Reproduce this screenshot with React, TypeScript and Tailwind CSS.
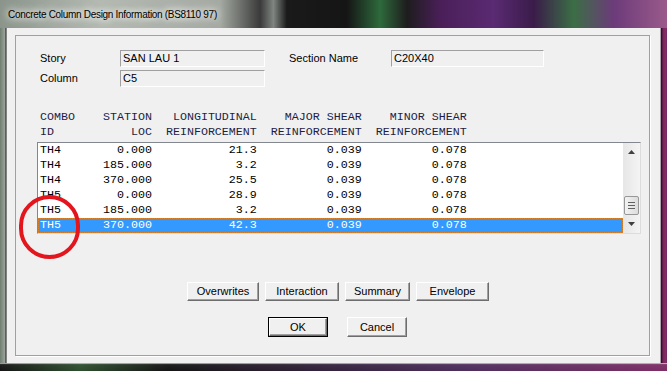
const rows = [
  ["TH4", "0.000", "21.3", "0.039", "0.078"],
  ["TH4", "185.000", "3.2", "0.039", "0.078"],
  ["TH4", "370.000", "25.5", "0.039", "0.078"],
  ["TH5", "0.000", "28.9", "0.039", "0.078"],
  ["TH5", "185.000", "3.2", "0.039", "0.078"],
  ["TH5", "370.000", "42.3", "0.039", "0.078"],
]

function line(r: string[]) {
  return r[0].padEnd(3) + r[1].padStart(13) + r[2].padStart(15) + r[3].padStart(15) + r[4].padStart(15)
}

function Field({ value, w }: { value: string; w: string }) {
  return (
    <div
      className={`${w} h-[17px] bg-[#f0f0f0] border border-t-[#a0a0a0] border-l-[#a0a0a0] border-r-white border-b-white pl-[2px] text-[11px] leading-[15px] text-black`}
    >
      {value}
    </div>
  )
}

function Btn({ label, w, def }: { label: string; w: string; def?: boolean }) {
  return (
    <div className={`${w} ${def ? "border border-black" : ""}`}>
      <div className="h-full flex items-center justify-center bg-[#f0f0f0] border border-t-white border-l-white border-r-[#6d6d6d] border-b-[#6d6d6d] text-[11px] text-black shadow-[inset_-1px_-1px_0_#a0a0a0]">
        {label}
      </div>
    </div>
  )
}

export default function App() {
  return (
    <div className="relative w-[667px] h-[371px] flex flex-col overflow-hidden bg-black font-['Liberation_Sans',Arial,sans-serif] select-none">
      {/* title bar */}
      <div className="h-[28px] flex items-center pl-[8px] bg-[linear-gradient(90deg,#8a948a_0%,#b4bab2_15%,#a4aaa2_33%,#3a3a3a_39%,#7f8580_41%,#1a1a1a_43%,#151515_52%,#2e6a3c_57%,#1d1d1d_61%,#4a1f58_66%,#5a2a72_74%,#3a1c4a_80%,#3b6e45_86%,#6c3b7a_92%,#9a5a8a_100%)]">
        <span className="text-[10px] tracking-[-0.3px] text-black [text-shadow:0_0_6px_#fff,0_0_10px_#fff,0_0_14px_rgba(255,255,255,0.8)]">
          Concrete Column Design Information (BS8110 97)
        </span>
      </div>

      <div className="flex flex-1">
        <div className="w-[7px] bg-[linear-gradient(90deg,#6f7d70,#9aa39a_70%,#2a2a2a_85%,#d0d0d0)]" />

        {/* client area */}
        <div className="flex-1 bg-[#f0f0f0] pl-[8px] pr-[10px] pt-[7px] pb-[7px] flex">
          <div className="flex-1 border border-[#a0a0a0] shadow-[1px_1px_0_#fff] pl-[21px] pt-[14px] flex flex-col">
            <div className="flex items-center h-[17px]">
              <span className="w-[83px] pl-[3px] text-[11px] text-black">Story</span>
              <Field value="SAN LAU 1" w="w-[145px]" />
              <span className="ml-[24px] w-[102px] text-[11px] text-black">Section Name</span>
              <Field value="C20X40" w="w-[153px]" />
            </div>
            <div className="flex items-center h-[17px] mt-[3px]">
              <span className="w-[83px] pl-[3px] text-[11px] text-black">Column</span>
              <Field value="C5" w="w-[145px]" />
            </div>

            <pre className="mt-[23px] pl-[3px] font-['Liberation_Mono','Courier_New',monospace] text-[11.67px] leading-[15px] text-[#1e1e46]">
              {"COMBO    STATION   LONGITUDINAL    MAJOR SHEAR    MINOR SHEAR\n"}
              {"ID           LOC  REINFORCEMENT  REINFORCEMENT  REINFORCEMENT"}
            </pre>

            <div className="mt-[2px] w-[604px] h-[92px] bg-white border border-t-[#828790] border-l-[#828790] border-r-[#dcdcdc] border-b-[#dcdcdc] flex">
              <div className="flex-1 flex flex-col">
                {rows.map((r, i) => {
                  const sel = i === rows.length - 1
                  return (
                    <pre
                      key={i}
                      className={`h-[15px] pl-[2px] font-['Liberation_Mono','Courier_New',monospace] text-[11.67px] leading-[15px] ${
                        sel ? "bg-[#3399ff] text-white outline-1 outline-dotted outline-[#d9822b] -outline-offset-1" : "text-black"
                      }`}
                    >
                      {line(r)}
                    </pre>
                  )
                })}
              </div>
              {/* scrollbar */}
              <div className="w-[17px] bg-[linear-gradient(90deg,#e6e6e6,#f4f4f4)] flex flex-col items-center">
                <div className="h-[17px] w-full flex items-center justify-center">
                  <svg width="7" height="4" viewBox="0 0 7 4"><path d="M0 4L3.5 0L7 4Z" fill="#404040" /></svg>
                </div>
                <div className="flex-1" />
                <div className="w-[15px] h-[19px] mb-[18px] rounded-[2px] border border-[#979797] bg-[linear-gradient(90deg,#f2f2f2,#dcdcdc)] flex flex-col items-center justify-center gap-[2px]">
                  <div className="w-[7px] h-px bg-[#606060]" />
                  <div className="w-[7px] h-px bg-[#606060]" />
                  <div className="w-[7px] h-px bg-[#606060]" />
                </div>
                <div className="h-[17px] w-full flex items-center justify-center -mt-[18px] mb-[1px]">
                  <svg width="7" height="4" viewBox="0 0 7 4"><path d="M0 0L3.5 4L7 0Z" fill="#404040" /></svg>
                </div>
              </div>
            </div>

            <div className="mt-[48px] ml-[150px] flex gap-[6px] h-[19px]">
              <Btn label="Overwrites" w="w-[72px]" />
              <Btn label="Interaction" w="w-[74px]" />
              <Btn label="Summary" w="w-[65px]" />
              <Btn label="Envelope" w="w-[73px]" />
            </div>
            <div className="mt-[16px] ml-[231px] flex gap-[19px] h-[20px]">
              <Btn label="OK" w="w-[60px]" def />
              <Btn label="Cancel" w="w-[60px]" />
            </div>
          </div>
        </div>

        <div className="w-[7px] bg-[linear-gradient(90deg,#f4f4f4,#2a1030_20%,#7a2458_45%,#8a2a62_80%,#6a2a6a)]" />
      </div>
      <div className="h-[8px] bg-[linear-gradient(180deg,#cfcfcf_0%,#101010_20%,#050505_100%),linear-gradient(90deg,#101010,#2a4a2a_12%,#101010_25%,#4a2a5a_70%,#7a2a62_100%)] [background-blend-mode:screen]" />

      {/* red annotation circle */}
      <div className="absolute left-[19px] top-[195px] w-[61px] h-[64px] rounded-full border-[4px] border-[#e3151d]" />
    </div>
  )
}
